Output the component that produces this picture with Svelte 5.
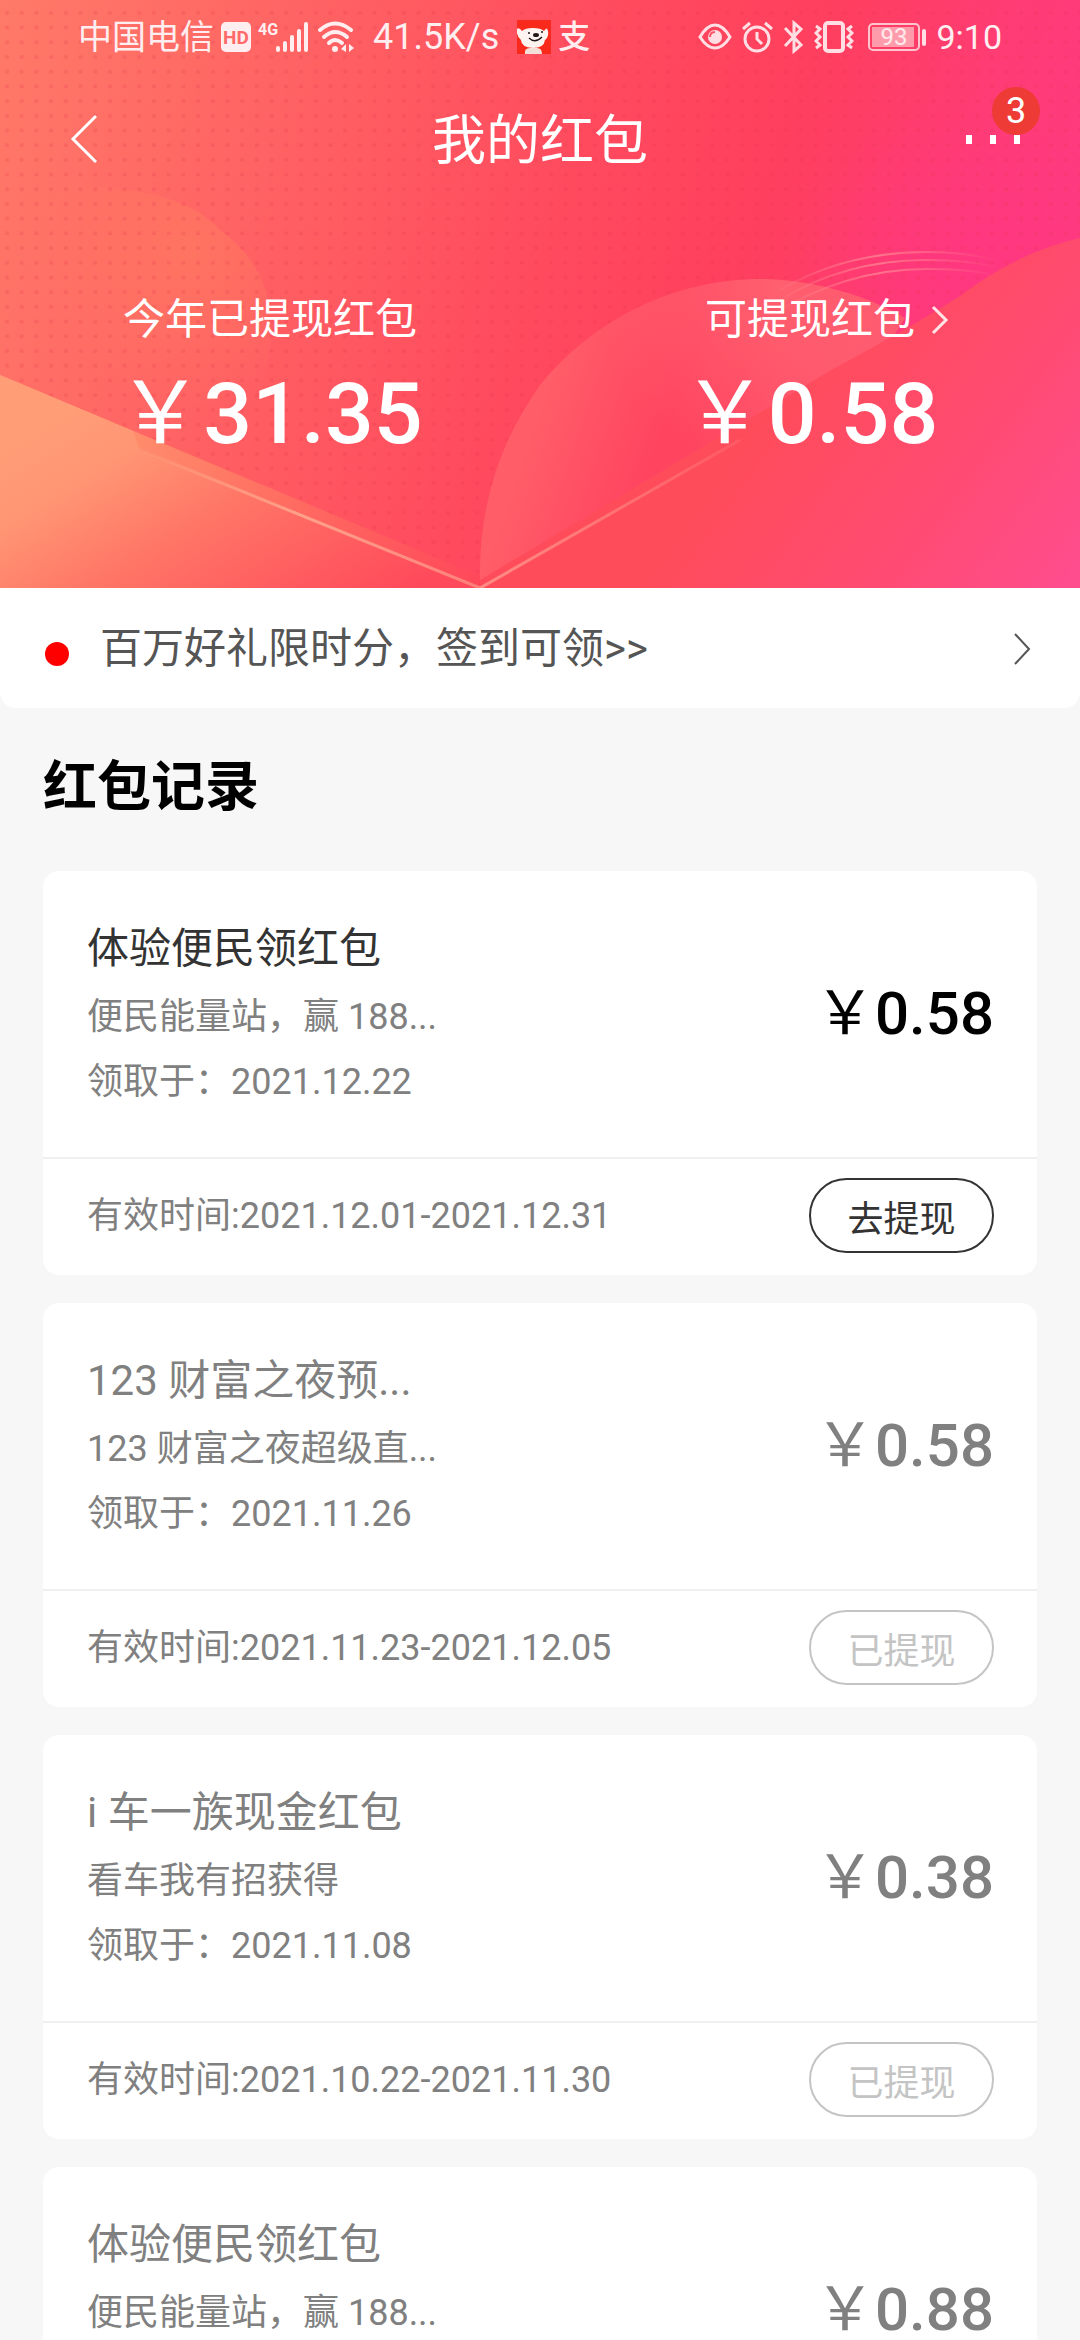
<script lang="ts">
  type Packet = {
    title: string;
    desc: string;
    received?: string;
    period?: string;
    amount: string;
    active?: boolean;
  };

  const carrier = '中国电信';
  const unread = 3;

  const packets: Packet[] = [
    {
      title: '体验便民领红包',
      desc: '便民能量站，赢 188...',
      received: '2021.12.22',
      period: '2021.12.01-2021.12.31',
      amount: '0.58',
      active: true
    },
    {
      title: '123 财富之夜预...',
      desc: '123 财富之夜超级直...',
      received: '2021.11.26',
      period: '2021.11.23-2021.12.05',
      amount: '0.58'
    },
    {
      title: 'i 车一族现金红包',
      desc: '看车我有招获得',
      received: '2021.11.08',
      period: '2021.10.22-2021.11.30',
      amount: '0.38'
    },
    {
      title: '体验便民领红包',
      desc: '便民能量站，赢 188...',
      amount: '0.88'
    }
  ];
</script>

<div class="page">
  <header class="hero">
    <!-- Background -->
    <svg class="hero-bg" viewBox="0 0 1080 588" preserveAspectRatio="none" aria-hidden="true">
      <defs>
        <linearGradient id="base" gradientUnits="userSpaceOnUse" x1="0" y1="0" x2="1020" y2="330">
          <stop offset="0" stop-color="#ff7a68" />
          <stop offset="0.3" stop-color="#ff6163" />
          <stop offset="0.56" stop-color="#ff4a5e" />
          <stop offset="0.74" stop-color="#ff3f5e" />
          <stop offset="0.9" stop-color="#ff3c74" />
          <stop offset="1" stop-color="#ff3a7e" />
        </linearGradient>
        <radialGradient id="pink" gradientUnits="userSpaceOnUse" cx="970" cy="270" r="170">
          <stop offset="0" stop-color="#ff3584" stop-opacity="0.7" />
          <stop offset="1" stop-color="#ff3584" stop-opacity="0" />
        </radialGradient>
        <radialGradient id="blob" gradientUnits="userSpaceOnUse" cx="190" cy="250" r="160">
          <stop offset="0" stop-color="#ff7a60" stop-opacity="0.7" />
          <stop offset="1" stop-color="#ff7a60" stop-opacity="0" />
        </radialGradient>
        <linearGradient id="left" gradientUnits="userSpaceOnUse" x1="90" y1="400" x2="260" y2="680">
          <stop offset="0" stop-color="#ff9d77" />
          <stop offset="0.2" stop-color="#ff9573" />
          <stop offset="0.5" stop-color="#ff7566" />
          <stop offset="1" stop-color="#ff4a5b" />
        </linearGradient>
        <linearGradient id="band" gradientUnits="userSpaceOnUse" x1="130" y1="430" x2="480" y2="580">
          <stop offset="0" stop-color="#ff8e6c" />
          <stop offset="0.4" stop-color="#ff7062" />
          <stop offset="1" stop-color="#ff485a" />
        </linearGradient>
        <linearGradient id="petal" gradientUnits="userSpaceOnUse" x1="560" y1="350" x2="820" y2="440">
          <stop offset="0" stop-color="#ff5d68" />
          <stop offset="0.45" stop-color="#ff4460" />
          <stop offset="0.65" stop-color="#ff4560" />
          <stop offset="1" stop-color="#ff5870" />
        </linearGradient>
        <radialGradient id="petalTop" gradientUnits="userSpaceOnUse" cx="780" cy="290" r="180">
          <stop offset="0" stop-color="#ff6070" />
          <stop offset="1" stop-color="#ff6070" stop-opacity="0" />
        </radialGradient>
        <linearGradient id="right" gradientUnits="userSpaceOnUse" x1="780" y1="400" x2="1060" y2="600">
          <stop offset="0" stop-color="#ff4c5b" />
          <stop offset="0.5" stop-color="#ff4b70" />
          <stop offset="1" stop-color="#ff4d8e" />
        </linearGradient>
        <linearGradient id="rayLeft" gradientUnits="userSpaceOnUse" x1="130" y1="440" x2="480" y2="588">
          <stop offset="0" stop-color="#ffb695" stop-opacity="0" />
          <stop offset="0.5" stop-color="#ffa18a" />
          <stop offset="1" stop-color="#ff7f7a" />
        </linearGradient>
        <linearGradient id="rayRight" gradientUnits="userSpaceOnUse" x1="480" y1="588" x2="740" y2="440">
          <stop offset="0" stop-color="#ff8c85" />
          <stop offset="1" stop-color="#ff8c85" stop-opacity="0.2" />
        </linearGradient>
        <linearGradient id="arc" gradientUnits="userSpaceOnUse" x1="760" y1="0" x2="1000" y2="0">
          <stop offset="0" stop-color="#ff8c95" stop-opacity="0" />
          <stop offset="0.5" stop-color="#ff8c95" stop-opacity="0.7" />
          <stop offset="1" stop-color="#ff8c95" stop-opacity="0" />
        </linearGradient>
        <pattern id="dots" width="14.7" height="14.7" patternUnits="userSpaceOnUse">
          <rect x="5" y="11" width="4" height="4" rx="1" fill="#e3304d" fill-opacity="0.2" />
        </pattern>
      </defs>
      <rect width="1080" height="588" fill="url(#base)" />
      <path d="M0 190C110 180 185 190 220 230C290 280 280 360 240 440L130 430L0 375Z" fill="url(#blob)" />
      <rect width="1080" height="588" fill="url(#pink)" />
      <rect width="1080" height="588" fill="url(#dots)" />
      <g>
        <path d="M480 588C478 500 502 440 540 385C595 318 675 279 762 279C815 280 868 296 905 318L840 420L560 588Z" fill="url(#petal)" />
        <path d="M480 588C478 500 502 440 540 385C595 318 675 279 762 279C815 280 868 296 905 318L840 420L560 588Z" fill="url(#petalTop)" />
      </g>
      <g fill="none" stroke="url(#arc)" stroke-width="2">
        <path d="M780 290Q845 252 927 252Q970 252 1000 262" />
        <path d="M780 300Q845 260 927 260Q970 260 1000 268" />
        <path d="M770 316Q845 269 927 269Q965 269 990 274" />
      </g>
      <path d="M0 375L480 576V588H0Z" fill="url(#band)" />
      <path d="M0 375L133 431L140 450L480 588H0Z" fill="url(#left)" />
      <path d="M480 580L833 369Q910 328 960 296Q1018 252 1080 238V588H480Z" fill="url(#right)" />
      <path d="M133 447L480 588" stroke="url(#rayLeft)" stroke-width="3" />
      <path d="M480 588L740 440" stroke="url(#rayRight)" stroke-width="3" />
    </svg>

    <div class="status-bar">
      <div class="status-group">
        <span class="carrier">{carrier}</span>
        <svg width="30" height="30" viewBox="0 0 30 30" aria-hidden="true">
          <rect width="30" height="30" rx="5" fill="#ffeef0" />
          <text x="15" y="22" text-anchor="middle" font-size="19" font-weight="700" fill="#ff6a68">HD</text>
        </svg>
        <svg width="52" height="32" viewBox="0 0 52 32" aria-hidden="true">
          <text x="0" y="14" font-size="16" font-weight="700" fill="#ffeef0">4G</text>
          <g fill="#ffeef0">
            <rect x="18" y="25" width="4" height="6" rx="2" />
            <rect x="25" y="20" width="4" height="11" rx="2" />
            <rect x="32" y="14" width="4" height="17" rx="2" />
            <rect x="39" y="8" width="4" height="23" rx="2" />
            <rect x="46" y="1" width="4" height="30" rx="2" />
          </g>
        </svg>
        <svg width="38" height="32" viewBox="0 0 38 32" aria-hidden="true">
          <g fill="none" stroke="#ffeef0" stroke-width="4" stroke-linecap="round">
            <path d="M3 9Q18 -4 34 9" />
            <path d="M7 16Q18 6 30 16" />
            <path d="M12 22Q18 16 25 22" />
          </g>
          <circle cx="18" cy="28" r="3" fill="#ffeef0" />
          <path d="M29 23V31L24 28ZM32 23L37 27L32 31Z" fill="#ffeef0" />
        </svg>
        <span class="speed">41.5K/s</span>
        <svg width="34" height="34" viewBox="0 0 34 34" aria-hidden="true">
          <rect width="34" height="34" fill="#f92a1c" />
          <path d="M8 34Q7 28 13 28H20Q25 28 25 34Z" fill="#f3ded9" />
          <path d="M0 9Q2 7 5 11Q8 8 16 8Q24 8 27 11Q30 6 31 11Q32 17 28 20Q27 28 16 28Q4 27 4 20Q-1 16 0 9Z" fill="#fdf3f1" />
          <ellipse cx="19" cy="15" rx="3" ry="2" fill="#201818" />
          <circle cx="12" cy="13" r="1" fill="#201818" />
          <circle cx="25" cy="12" r="1" fill="#201818" />
          <path d="M12 18Q18 24 25 17" fill="none" stroke="#201818" stroke-width="1.3" />
        </svg>
        <span class="pay">支</span>
      </div>

      <div class="status-group right">
        <svg width="34" height="28" viewBox="0 0 34 28" aria-hidden="true">
          <path d="M2 14Q9 2 17 2Q25 2 32 14Q25 25 17 25Q9 25 2 14Z" fill="none" stroke="#ffdfe4" stroke-width="3" />
          <circle cx="17" cy="14" r="7" fill="#ffdfe4" />
          <path d="M12 14Q12 9 17 9" fill="none" stroke="#ff5267" stroke-width="2" />
        </svg>
        <svg width="31" height="32" viewBox="0 0 31 32" aria-hidden="true">
          <g fill="none" stroke="#ffdfe4" stroke-width="3">
            <circle cx="15" cy="18" r="12" />
            <path d="M15 11V18L20 23M1 8L8 2M23 2L30 8" />
          </g>
        </svg>
        <svg width="21" height="34" viewBox="0 0 21 34" aria-hidden="true">
          <path d="M2 8L18 25L11 31V3L18 9L2 26" fill="none" stroke="#ffdfe4" stroke-width="3" />
        </svg>
        <svg width="40" height="32" viewBox="0 0 40 32" aria-hidden="true">
          <rect x="11" y="2" width="18" height="28" rx="3" fill="none" stroke="#ffdfe4" stroke-width="4" />
          <path d="M2 5L6 8L2 12L6 16L2 20L6 24L2 27M38 5L34 8L38 12L34 16L38 20L34 24L38 27" fill="none" stroke="#ffdfe4" stroke-width="3" />
        </svg>
        <svg class="battery" width="58" height="28" viewBox="0 0 58 28" aria-hidden="true">
          <rect x="1" y="1" width="50" height="26" rx="4" fill="none" stroke="#ffc4ce" stroke-width="2" />
          <rect x="4" y="4" width="42" height="20" fill="#ff9cab" />
          <rect x="54" y="6" width="4" height="17" rx="2" fill="#ffdfe4" />
          <text x="26" y="22" text-anchor="middle" font-size="24" fill="#ffeaed">93</text>
        </svg>
        <span class="clock">9:10</span>
      </div>
    </div>

    <nav class="nav">
      <button class="icon-btn" aria-label="返回">
        <svg width="28" height="50" viewBox="0 0 28 50" aria-hidden="true">
          <path d="M26 2L3 25L26 48" fill="none" stroke="#fff" stroke-width="3" />
        </svg>
      </button>
      <h1>我的红包</h1>
      <button class="icon-btn more" aria-label="更多">
        <svg width="54" height="9" viewBox="0 0 54 9" aria-hidden="true">
          <path d="M0 0H6V9H0ZM24 0H30V9H24ZM48 0H54V9H48Z" fill="#fff" />
        </svg>
        <span class="badge">{unread}</span>
      </button>
    </nav>

    <section class="summary">
      <div class="summary-item">
        <p class="label"><span>今年已提现红包</span></p>
        <p class="total"><span class="yen">￥</span>31.35</p>
      </div>
      <div class="summary-item">
        <a class="label" href="#withdraw">
          <span>可提现红包</span>
          <svg width="18" height="30" viewBox="0 0 18 30" aria-hidden="true">
            <path d="M2 2L15 15L2 28" fill="none" stroke="#ffe3e6" stroke-width="3" />
          </svg>
        </a>
        <p class="total"><span class="yen">￥</span>0.58</p>
      </div>
    </section>
  </header>

  <a class="notice" href="#sign">
    <span class="notice-dot"></span>
    <span class="notice-text">百万好礼限时分，签到可领&gt;&gt;</span>
    <svg width="18" height="32" viewBox="0 0 18 32" aria-hidden="true">
      <path d="M2 1L16 16L2 31" fill="none" stroke="#555" stroke-width="2" />
    </svg>
  </a>

  <main class="records">
    <h2>红包记录</h2>
    <ul class="list">
      {#each packets as item}
        <li class="card" class:active={item.active}>
          <div class="card-main">
            <div class="info">
              <h3>{item.title}</h3>
              <p>{item.desc}</p>
              {#if item.received}
                <p>领取于：{item.received}</p>
              {/if}
            </div>
            <span class="price"><span class="yen">￥</span>{item.amount}</span>
          </div>
          {#if item.period}
            <div class="card-foot">
              <span>有效时间:{item.period}</span>
              <button class="pill" disabled={!item.active}>
                {item.active ? '去提现' : '已提现'}
              </button>
            </div>
          {/if}
        </li>
      {/each}
    </ul>
  </main>
</div>

<style>
  :global(body) {
    background: #f7f7f7;
  }

  .page {
    display: flex;
    flex-direction: column;
    height: 100vh;
    overflow: hidden;
    font-family: Roboto, 'Noto Sans CJK SC', sans-serif;
    background: #f7f7f7;
  }

  h1,
  h2,
  h3,
  p,
  ul {
    margin: 0;
    padding: 0;
    font-weight: 400;
  }

  a {
    color: inherit;
    text-decoration: none;
  }

  button {
    font-family: inherit;
    cursor: pointer;
  }

  svg {
    display: block;
    flex-shrink: 0;
  }

  .yen {
    font-weight: 400;
  }

  /* Header */
  .hero {
    position: relative;
    flex-shrink: 0;
    padding-bottom: 124px;
    color: #fff;
  }

  .hero-bg {
    position: absolute;
    top: 0;
    left: 0;
    width: 100%;
    height: 100%;
  }

  .status-bar {
    position: relative;
    display: flex;
    justify-content: space-between;
    align-items: center;
    height: 74px;
    padding: 0 78px;
    color: #ffeef0;
  }

  .status-group {
    display: flex;
    align-items: center;
    gap: 7px;
  }

  .status-group.right {
    gap: 10px;
  }

  .carrier {
    font-size: 34px;
    line-height: 40px;
  }

  .speed {
    margin: 0 11px;
    font-size: 36px;
    line-height: 40px;
  }

  .pay {
    font-size: 32px;
    font-weight: 500;
    line-height: 40px;
  }

  .battery {
    margin-left: 4px;
  }

  .clock {
    font-size: 34px;
    line-height: 40px;
  }

  .nav {
    position: relative;
    display: grid;
    grid-template-columns: 1fr auto 1fr;
    align-items: center;
    height: 130px;
    padding: 0 60px;
  }

  .nav h1 {
    padding-top: 6px;
    font-size: 54px;
    line-height: 72px;
  }

  .icon-btn {
    justify-self: start;
    padding: 0 10px;
    border: none;
    background: transparent;
  }

  .more {
    position: relative;
    justify-self: end;
    padding: 0;
  }

  .badge {
    position: absolute;
    right: -20px;
    bottom: 9px;
    width: 48px;
    height: 48px;
    border-radius: 50%;
    background: #ee3b35;
    color: #fff;
    font-size: 36px;
    line-height: 48px;
    text-align: center;
  }

  .summary {
    position: relative;
    display: grid;
    grid-template-columns: 1fr 1fr;
    padding-top: 86px;
  }

  .label {
    display: grid;
    grid-template-columns: 1fr auto 1fr;
    column-gap: 16px;
    align-items: center;
    font-size: 42px;
    line-height: 60px;
  }

  .label span {
    grid-column: 2;
  }

  .total {
    margin-top: 14px;
    font-size: 86px;
    font-weight: 500;
    line-height: 100px;
    text-align: center;
  }

  /* Notice */
  .notice {
    display: flex;
    flex-shrink: 0;
    align-items: center;
    box-sizing: border-box;
    height: 120px;
    padding: 2px 49px 0 45px;
    border-radius: 0 0 16px 16px;
    background: #fff;
    color: #555;
  }

  .notice-dot {
    width: 24px;
    height: 24px;
    margin-top: 10px;
    border-radius: 50%;
    background: #f00;
  }

  .notice-text {
    flex: 1;
    margin-left: 31px;
    font-size: 42px;
    line-height: 60px;
  }

  /* Records */
  .records {
    padding: 46px 43px 0;
  }

  .records h2 {
    margin-bottom: 49px;
    color: #000;
    font-size: 54px;
    font-weight: 700;
    line-height: 68px;
  }

  .list {
    display: flex;
    flex-direction: column;
    gap: 28px;
    list-style: none;
  }

  .card {
    border-radius: 16px;
    background: #fff;
    color: #808080;
  }

  .card-main {
    display: flex;
    justify-content: space-between;
    align-items: center;
    box-sizing: border-box;
    min-height: 288px;
    padding: 0 43px 0 44px;
    border-bottom: 2px solid #f0f0f0;
  }

  .info {
    align-self: flex-start;
    padding-top: 45px;
    font-size: 36px;
    line-height: 65px;
  }

  .info h3 {
    margin-bottom: 4px;
    font-size: 42px;
    line-height: 65px;
  }

  .price {
    font-size: 60px;
    font-weight: 500;
    line-height: 72px;
  }

  .active h3 {
    color: #333;
  }

  .active .price {
    color: #000;
  }

  .card-foot {
    display: flex;
    justify-content: space-between;
    align-items: center;
    box-sizing: border-box;
    height: 116px;
    padding: 0 43px 3px 44px;
    font-size: 36px;
    line-height: 40px;
  }

  .pill {
    width: 185px;
    height: 75px;
    padding: 0;
    border: 2px solid #333;
    border-radius: 38px;
    background: #fff;
    color: #333;
    font-size: 36px;
  }

  .pill:disabled {
    border-color: #c4c4c4;
    color: #c4c4c4;
    cursor: default;
  }
</style>
